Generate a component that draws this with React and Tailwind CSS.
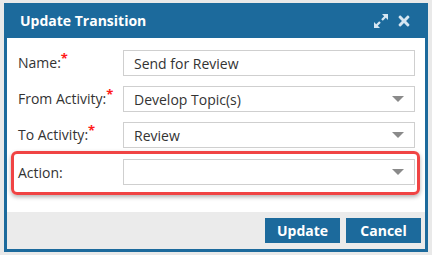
import { FaTimes } from "react-icons/fa";

const Req = () => <span className="relative -top-[5px] text-[13px] font-bold text-[#ff1a1a]">*</span>;

const Caret = () => (
    <span className="h-0 w-0 border-x-[6px] border-t-[6px] border-x-transparent border-t-[#8a8a8a]" />
);

const Expand = () => (
    <svg width="16" height="16" viewBox="0 0 16 16" fill="#d6e6f2">
        <path d="M9 1h6v6l-2.2-2.2L9.8 7.8 8.2 6.2l3-3L9 1z" />
        <path d="M7 15H1V9l2.2 2.2 3-3 1.6 1.6-3 3L7 15z" />
    </svg>
);

const Field = ({ label, required, value, select }) => (
    <div className="flex items-center">
        <label className="w-[105px] shrink-0 text-[14px] text-[#333]">
            {label}
            {required && <Req />}
        </label>
        <div className="flex h-[26px] flex-1 items-center justify-between border border-[#cfcfcf] bg-white pl-[10px] pr-[10px] text-[14px] text-[#333]">
            <span>{value}</span>
            {select && <Caret />}
        </div>
    </div>
);

export default function App() {
    return (
        <div className="h-[255px] w-[432px] bg-[#e9e9e9] px-[4px] pt-[3px] font-['Open_Sans',sans-serif]">
            <div className="flex h-[249px] flex-col border-x-[3px] border-b-[3px] border-[#1c6a9c] bg-white">
                <div className="-mx-[3px] flex h-[35px] items-center justify-between bg-[#1c6a9c] pl-[16px] pr-[16px]">
                    <span className="text-[14px] font-bold text-white">Update Transition</span>
                    <div className="flex items-center gap-[7px] text-[#d6e6f2]">
                        <Expand />
                        <FaTimes className="text-[16px]" />
                    </div>
                </div>
                <div className="flex flex-1 flex-col gap-[10px] pt-[12px] pl-[11px] pr-[10px]">
                    <Field label="Name:" required value="Send for Review" />
                    <Field label="From Activity:" required value="Develop Topic(s)" select />
                    <Field label="To Activity:" required value="Review" select />
                    <div className="-mt-[7px] -ml-[7px] -mr-[5px] rounded-[6px] border-[3px] border-[#f04444] pt-[5px] pb-[7px] pl-[4px] pr-[2px] shadow-[0_2px_4px_rgba(0,0,0,0.3)]">
                        <Field label="Action:" value="" select />
                    </div>
                </div>
                <div className="flex h-[37px] items-center justify-end gap-[6px] bg-[#ebebeb] pr-[4px]">
                    <button className="h-[25px] w-[75px] bg-[#1c6a9c] text-[14px] font-bold text-white">Update</button>
                    <button className="h-[25px] w-[75px] bg-[#1c6a9c] text-[14px] font-bold text-white">Cancel</button>
                </div>
            </div>
        </div>
    );
}
